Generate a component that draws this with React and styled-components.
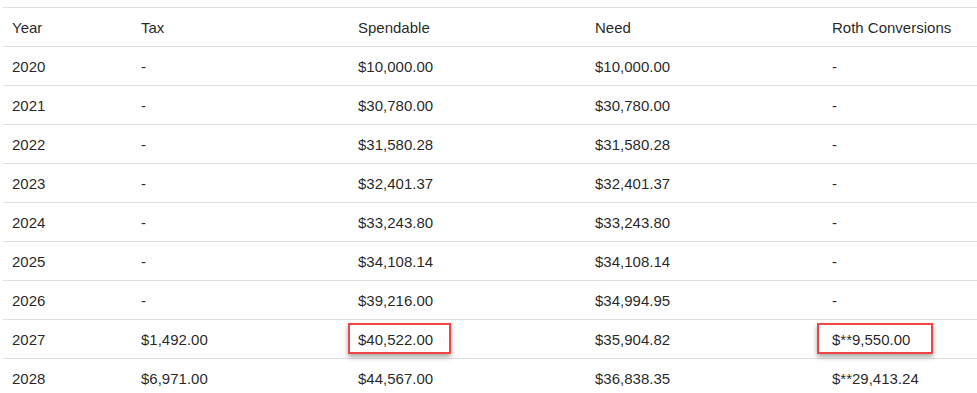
import React from 'react';
import styled, { createGlobalStyle } from 'styled-components';

const GlobalStyle = createGlobalStyle`
	body {
		margin: 0;
		background: #ffffff;
		font-family: "Liberation Sans", Arial, sans-serif;
	}
`;

const Page = styled.div`
	padding: 7px 0 0 3px;
	overflow: hidden;
	height: 393px;
	box-sizing: border-box;
`;

const Table = styled.table`
	border-collapse: collapse;
	table-layout: fixed;
	width: 974px;
	font-size: 15px;
	color: rgba(0, 0, 0, 0.87);
`;

const Cell = styled.td`
	position: relative;
	height: 39px;
	padding: 0 9px;
	border-top: 1px solid #e0e0e0;
	white-space: nowrap;
	vertical-align: middle;
	box-sizing: border-box;
`;

const Head = styled(Cell).attrs({ as: 'th' })`
	font-weight: normal;
	text-align: left;
`;

const Mark = styled.span`
	position: absolute;
	top: 3px;
	left: ${p => p.$left}px;
	width: ${p => p.$width}px;
	height: 31px;
	border: 2px solid #ef4545;
	box-sizing: border-box;
	box-shadow: 0 3px 5px rgba(0, 0, 0, 0.35);
	pointer-events: none;
`;

const widths = [129, 217, 237, 237, 154];
const headers = ['Year', 'Tax', 'Spendable', 'Need', 'Roth Conversions'];

const rows = [
	['2020', '-', '$10,000.00', '$10,000.00', '-'],
	['2021', '-', '$30,780.00', '$30,780.00', '-'],
	['2022', '-', '$31,580.28', '$31,580.28', '-'],
	['2023', '-', '$32,401.37', '$32,401.37', '-'],
	['2024', '-', '$33,243.80', '$33,243.80', '-'],
	['2025', '-', '$34,108.14', '$34,108.14', '-'],
	['2026', '-', '$39,216.00', '$34,994.95', '-'],
	['2027', '$1,492.00', '$40,522.00', '$35,904.82', '$**9,550.00'],
	['2028', '$6,971.00', '$44,567.00', '$36,838.35', '$**29,413.24'],
];

// annotation boxes drawn over the 2027 row
const marks = {
	'2027-2': { left: -1, width: 103 },
	'2027-4': { left: -6, width: 116 },
};

export default function App() {
	return (
		<Page>
			<GlobalStyle />
			<Table>
				<colgroup>
					{widths.map((w, i) => (
						<col key={i} style={{ width: w }} />
					))}
				</colgroup>
				<thead>
					<tr>
						{headers.map(h => (
							<Head key={h}>{h}</Head>
						))}
					</tr>
				</thead>
				<tbody>
					{rows.map(row => (
						<tr key={row[0]}>
							{row.map((v, i) => {
								const m = marks[`${row[0]}-${i}`];
								return (
									<Cell key={i}>
										{v}
										{m && <Mark $left={m.left} $width={m.width} />}
									</Cell>
								);
							})}
						</tr>
					))}
				</tbody>
			</Table>
		</Page>
	);
}
